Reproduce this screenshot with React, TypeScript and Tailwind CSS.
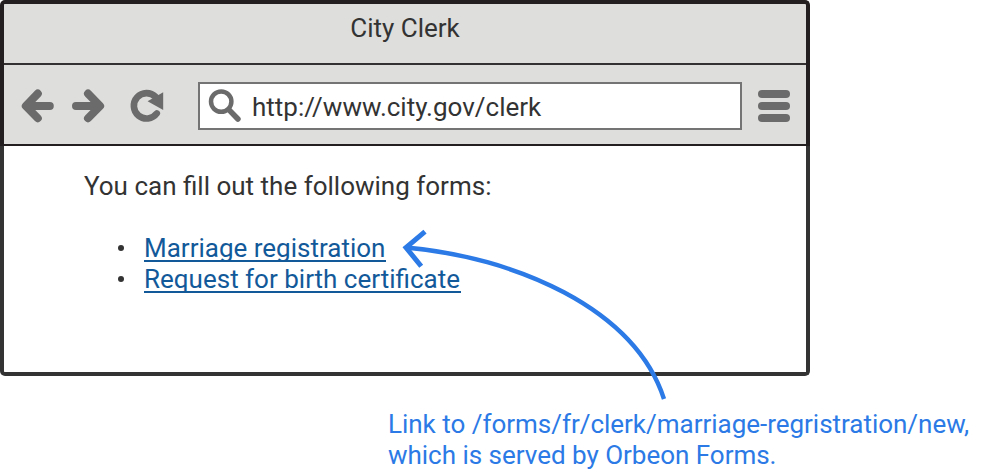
function TitleBar() {
  return (
    <div className="flex h-[61px] justify-center border-b-2 border-[#333132] pt-[9px] text-[#333]">
      <h1 className="text-[26px] leading-[31px]">City Clerk</h1>
    </div>
  );
}

function Toolbar() {
  return (
    <div className="flex h-[81px] border-b-2 border-[#231f20] pt-[17px] text-[#6b6b6b]">
      <svg className="mt-[7px] ml-[17px] h-[34px] w-[34px] shrink-0" viewBox="0 0 34 34" fill="none" stroke="currentColor" strokeWidth="8" strokeLinecap="round" strokeLinejoin="round">
        <path d="M16.8 4.6 4.8 17 16.8 29.2M7 17h21.8" />
      </svg>
      <svg className="mt-[7px] ml-[16px] h-[34px] w-[34px] shrink-0" viewBox="0 0 34 34" fill="none" stroke="currentColor" strokeWidth="8" strokeLinecap="round" strokeLinejoin="round">
        <path d="M17 4.6 29.1 17 17 29.2M27 17H5" />
      </svg>
      <svg className="mt-[7px] ml-[25px] h-[34px] w-[36px] shrink-0" viewBox="0 0 36 34">
        <path d="M26.8 24.4A12.7 12.7 0 1 1 25.6 7.9" fill="none" stroke="currentColor" strokeWidth="6.6" strokeLinecap="round" />
        <path d="M33.2 3.3v17.7L17.6 12.3Z" fill="currentColor" />
      </svg>
      <div className="ml-[32px] flex h-[48px] w-[544px] shrink-0 border-2 border-[#747474] bg-white">
        <svg className="mt-[5px] ml-[8px] h-[34px] w-[34px] shrink-0" viewBox="0 0 34 34" fill="none" stroke="currentColor">
          <circle cx="13.2" cy="12.6" r="10.2" strokeWidth="4.5" />
          <path d="m20.8 20.6 9.1 9.4" strokeWidth="5.6" strokeLinecap="round" />
        </svg>
        <span className="mt-[8px] ml-[10px] text-[26px] leading-[31px] text-[#333]">http://www.city.gov/clerk</span>
      </div>
      <div className="mt-[8px] ml-[16px] flex flex-col gap-[4px]">
        <div className="h-[8px] w-[32px] rounded-full bg-[#6b6b6b]" />
        <div className="h-[8px] w-[32px] rounded-full bg-[#6b6b6b]" />
        <div className="h-[8px] w-[32px] rounded-full bg-[#6b6b6b]" />
      </div>
    </div>
  );
}

function FormLink({ label }: { label: string }) {
  return (
    <li className="flex h-[31px] items-start">
      <span className="mt-[12px] mr-[20px] h-[6px] w-[6px] rounded-full bg-[#333]" />
      <a className="h-[29px] border-b-2 border-[#12599a] pr-px text-[#12599a]">{label}</a>
    </li>
  );
}

export default function App() {
  return (
    <main className="relative h-[472px] w-[982px] overflow-hidden bg-white font-['Roboto',sans-serif] text-[26px] leading-[31px]">
      <section className="w-[810px]">
        <header className="h-[146px] rounded-t-[5px] border-x-4 border-t-4 border-[#231f20] bg-[#dededc]">
          <TitleBar />
          <Toolbar />
        </header>
        <div className="h-[230px] rounded-b-[5px] border-x-4 border-b-4 border-[#333] pt-[25px] text-[#333]">
          <p className="ml-[80px] whitespace-nowrap">You can fill out the following forms:</p>
          <ul className="mt-[31px] ml-[114px]">
            <FormLink label="Marriage registration" />
            <FormLink label="Request for birth certificate" />
          </ul>
        </div>
      </section>
      <p className="mt-[33px] ml-[388px] whitespace-nowrap tracking-[-0.02px] text-[#2b7ae6]">
        Link to /forms/fr/clerk/marriage-regristration/new,
        <br />
        which is served by Orbeon Forms.
      </p>
      <svg className="absolute top-[220px] left-[380px] h-[190px] w-[300px]" viewBox="0 0 300 190" fill="none" stroke="#2b7ae6">
        <path d="M26 27.5C133 37 254 87 284 179" strokeWidth="4.4" />
        <path d="M45 11.7 26 27.5 41.2 46.3" strokeWidth="5" />
      </svg>
    </main>
  );
}
